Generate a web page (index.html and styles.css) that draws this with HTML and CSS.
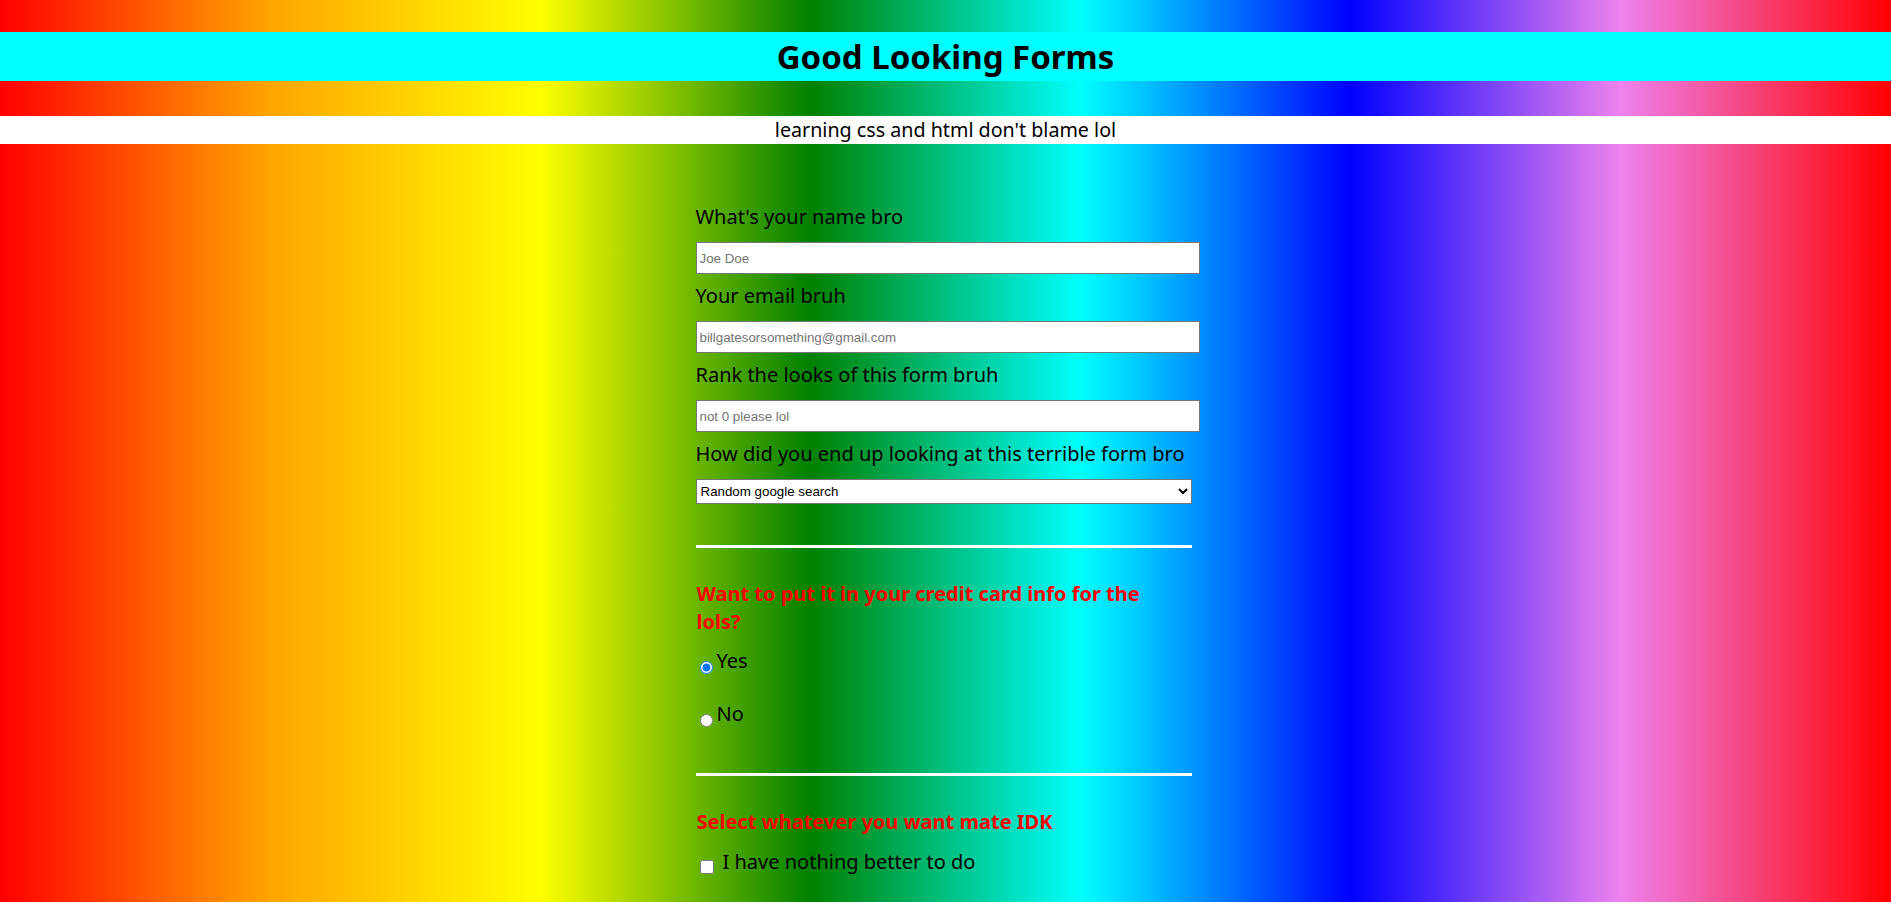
FILE: index.html
```html
<!DOCTYPE html>
<html lang="en">
<head>
<meta charset="utf-8">
<title>Good Looking Forms</title>
<link rel="stylesheet" href="styles.css">
</head>
<body>
<header class="masthead">
  <h1 class="title">Good Looking Forms</h1>
  <p class="subtitle">learning css and html don't blame lol</p>
</header>
<form class="survey">
  <label class="field-label" for="name">What's your name bro</label>
  <input class="text-input" type="text" id="name" placeholder="Joe Doe">
  <label class="field-label" for="email">Your email bruh</label>
  <input class="text-input" type="email" id="email" placeholder="billgatesorsomething@gmail.com">
  <label class="field-label" for="rank">Rank the looks of this form bruh</label>
  <input class="text-input" type="number" id="rank" placeholder="not 0 please lol">
  <label class="field-label" for="how">How did you end up looking at this terrible form bro</label>
  <select class="dropdown" id="how">
    <option>Random google search</option>
    <option>A friend sent it</option>
    <option>No idea</option>
  </select>

  <hr class="divider">

  <p class="question">Want to put it in your credit card info for the lols?</p>
  <label class="option option-first"><input class="radio" type="radio" name="cc" checked><span>Yes</span></label>
  <label class="option option-next"><input class="radio" type="radio" name="cc"><span>No</span></label>

  <hr class="divider divider-second">

  <p class="question">Select whatever you want mate IDK</p>
  <label class="check-option"><input class="checkbox" type="checkbox"><span>I have nothing better to do</span></label>
</form>
</body>
</html>
```

FILE: styles.css
```css
html, body {
  margin: 0;
  padding: 0;
}

body {
  min-height: 100vh;
  font-family: "Noto Sans", "DejaVu Sans", sans-serif;
  color: #000;
  background: linear-gradient(to right, red, orange, yellow, green, cyan, blue, violet, red);
}

.masthead {
  display: flex;
  flex-direction: column;
  padding-top: 32px;
}

.title {
  margin: 0;
  height: 49px;
  line-height: 49px;
  background: cyan;
  text-align: center;
  font-size: 33px;
  font-weight: 700;
}

.subtitle {
  margin: 35px 0 0;
  background: #fff;
  text-align: center;
  font-size: 19.7px;
  line-height: 28px;
  height: 28px;
}

.survey {
  box-sizing: border-box;
  width: 500px;
  margin: 0 auto;
  padding: 51px 4px 0 0;
  display: flex;
  flex-direction: column;
  align-items: flex-start;
}

.field-label {
  display: block;
  font-size: 20px;
  line-height: 28px;
  margin: 8px 0 11px;
  white-space: nowrap;
}

.text-input {
  box-sizing: border-box;
  width: 504px;
  height: 32px;
  margin: 0;
  padding: 0 3px;
  border: 1px solid #767676;
  background: #fff;
  font-family: "Liberation Sans", Arial, sans-serif;
  font-size: 13.333px;
  color: #000;
}

.text-input::placeholder {
  color: #757575;
}

.text-input::-webkit-outer-spin-button,
.text-input::-webkit-inner-spin-button {
  -webkit-appearance: none;
  margin: 0;
}

.dropdown {
  box-sizing: border-box;
  width: 496px;
  height: 25px;
  margin: 0;
  border: 1px solid #767676;
  border-radius: 0;
  background: #fff;
  font-family: "Liberation Sans", Arial, sans-serif;
  font-size: 13.333px;
  color: #000;
}

.divider {
  align-self: stretch;
  height: 3px;
  margin: 41px 0 0;
  border: 0;
  background: #fff;
}

.divider-second {
  margin-top: 45px;
}

.question {
  max-width: 470px;
  margin: 32px 0 0;
  padding-left: 1px;
  color: red;
  font-size: 20px;
  font-weight: 700;
  line-height: 28px;
}

.option {
  display: flex;
  align-items: flex-start;
  font-size: 20px;
  line-height: 28px;
}

.option-first {
  margin-top: 11px;
}

.option-next {
  margin-top: 25px;
}

.radio {
  width: 13px;
  height: 13px;
  margin: 14px 4px 0 4px;
}

.check-option {
  display: flex;
  align-items: flex-start;
  gap: 6px;
  margin-top: 12px;
  font-size: 20px;
  line-height: 28px;
}

.checkbox {
  width: 14px;
  height: 14px;
  margin: 12px 3px 0 4px;
}
```
